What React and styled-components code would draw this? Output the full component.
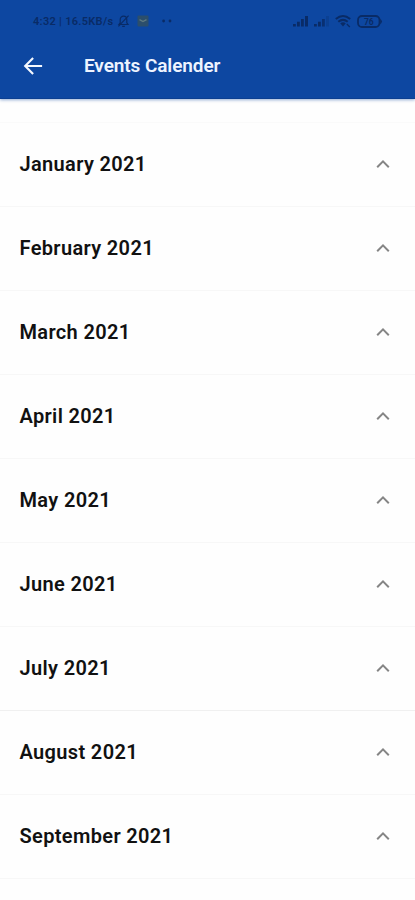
import React, { useState } from "react";
import styled, { createGlobalStyle } from "styled-components";

const GlobalStyle = createGlobalStyle`
  * {
    box-sizing: border-box;
  }

  body {
    margin: 0;
    background: #fefefe;
    font-family: Roboto, "Liberation Sans", sans-serif;
  }
`;

const Screen = styled.main`
  height: 900px;
  overflow: hidden;
`;

const Header = styled.header`
  height: 99px;
  background: #0d47a1;
  border-bottom: 1px solid #0b3f91;
  box-shadow: 0 1px 3px rgba(13, 71, 161, 0.45);
`;

const StatusBar = styled.div`
  display: flex;
  justify-content: space-between;
  align-items: center;
  height: 42px;
  padding: 0 32px 0 33px;
  color: #092b66;
`;

const StatusGroup = styled.div`
  display: flex;
  align-items: center;
  gap: ${(props) => props.$gap}px;

  svg {
    display: block;
  }
`;

const Clock = styled.span`
  width: 80px;
  font-size: 11px;
  font-weight: 600;
  letter-spacing: 0.3px;
  white-space: nowrap;
`;

const Toolbar = styled.div`
  display: flex;
  align-items: center;
  height: 48px;
  padding-left: 20px;
`;

const BackButton = styled.button`
  width: 26px;
  height: 26px;
  margin-right: 38px;
  padding: 0;
  border: 0;
  background: none;
  color: #f4f8ff;

  svg {
    display: block;
  }
`;

const Title = styled.h1`
  margin: 0;
  color: #eef4ff;
  font-size: 19px;
  font-weight: 600;
  letter-spacing: -0.1px;
  line-height: 24px;
`;

const MonthList = styled.ul`
  margin: 23px 0 0;
  padding: 0;
  border-top: 1px solid #fafafa;
  list-style: none;
`;

const MonthRow = styled.li`
  display: flex;
  justify-content: space-between;
  align-items: center;
  height: 84px;
  padding: 0 19px 2px 19.5px;
  border-bottom: 1px solid ${(props) => (props.$strong ? "#f0f0f0" : "#f7f7f7")};
  cursor: pointer;
`;

const MonthName = styled.span`
  color: #111;
  font-size: 20px;
  font-weight: 600;
  letter-spacing: 0.35px;
  line-height: 24px;
`;

const Chevron = styled.svg`
  display: block;
  transform: ${(props) => (props.$open ? "rotate(180deg)" : "none")};
`;

const months = [
  { name: "January 2021" },
  { name: "February 2021" },
  { name: "March 2021" },
  { name: "April 2021" },
  { name: "May 2021" },
  { name: "June 2021" },
  { name: "July 2021", strong: true },
  { name: "August 2021" },
  { name: "September 2021" },
];

const MutedBell = () => (
  <svg width="13" height="14" viewBox="0 0 13 14" fill="none" stroke="currentColor" strokeWidth="1.2">
    <path d="M2 10.5h9L9.8 8.8V5.4a3.3 3.3 0 0 0-6.6 0v3.4zM5.2 12.3h2.6M11.6 1.6L1.4 12.4" />
  </svg>
);

const MailBadge = () => (
  <svg width="12" height="12" viewBox="0 0 12 12">
    <rect x="0.5" y="0.5" width="11" height="11" rx="1" fill="#2b4e6c" />
    <path d="M2.5 4.6L6 6.6l3.5-2" fill="none" stroke="#5f7a80" strokeWidth="1.3" />
  </svg>
);

const Dots = () => (
  <svg width="10" height="4" viewBox="0 0 10 4" fill="currentColor">
    <circle cx="1.6" cy="2" r="1.4" />
    <circle cx="8" cy="2" r="1.4" />
  </svg>
);

// the second SIM shows its last bar faded
const Signal = ({ weak }) => (
  <svg width="16" height="12" viewBox="0 0 16 12" fill="currentColor">
    <path d="M0 9h2.8v2.5H0zM4 6.7h2.8v4.8H4z" />
    <path d="M8 4h2.8v7.5H8z" opacity={weak ? 0.8 : 1} />
    <path d="M12 1h3v10.5h-3z" opacity={weak ? 0.25 : 1} />
  </svg>
);

const Wifi = () => (
  <svg width="17" height="14" viewBox="0 0 17 14" fill="none" stroke="currentColor" strokeWidth="2">
    <path d="M0.8 5q7.2-6 14.4 0M3.3 7.8q4.7-3.8 9.4 0" />
    <path d="M5.2 9.3q2.8-2 5.6 0L8 12.6z" fill="currentColor" stroke="none" />
    <path d="M11.8 10l3 3" strokeWidth="1.2" />
  </svg>
);

const Battery = () => (
  <svg width="26" height="13" viewBox="0 0 26 13">
    <rect x="1" y="1" width="21.5" height="11" rx="4" fill="none" stroke="currentColor" strokeWidth="1.8" />
    <path d="M23.2 3.7q3.4 2.8 0 5.6z" fill="currentColor" />
    <text x="11.8" y="9.6" textAnchor="middle" fontSize="8.5" fontWeight="700" fill="currentColor">
      76
    </text>
  </svg>
);

function App() {
  const [opened, setOpened] = useState(null);

  const toggleMonth = (name) => {
    setOpened(opened === name ? null : name);
  };

  return (
    <Screen>
      <GlobalStyle />
      <Header>
        <StatusBar>
          <StatusGroup $gap={4}>
            <Clock>4:32 | 16.5KB/s</Clock>
            <StatusGroup $gap={7}>
              <MutedBell />
              <StatusGroup $gap={13}>
                <MailBadge />
                <Dots />
              </StatusGroup>
            </StatusGroup>
          </StatusGroup>
          <StatusGroup $gap={5}>
            <Signal />
            <Signal weak />
            <Wifi />
            <Battery />
          </StatusGroup>
        </StatusBar>
        <Toolbar>
          <BackButton aria-label="Back">
            <svg width="26" height="26" viewBox="0 0 24 24" fill="currentColor">
              <path d="M20.4 11H7.1l5.7-5.6L11.4 4l-8 8 8 8 1.4-1.4L7.1 13h13.3z" />
            </svg>
          </BackButton>
          <Title>Events Calender</Title>
        </Toolbar>
      </Header>
      <MonthList>
        {months.map((month) => {
          return (
            <MonthRow
              key={month.name}
              $strong={month.strong}
              onClick={() => toggleMonth(month.name)}
            >
              <MonthName>{month.name}</MonthName>
              <Chevron
                $open={opened === month.name}
                width="26"
                height="26"
                viewBox="0 0 26 26"
                fill="none"
                stroke="#858585"
                strokeWidth="2"
              >
                <path d="M7.2 16.2L13 10.4l5.8 5.8" />
              </Chevron>
            </MonthRow>
          );
        })}
      </MonthList>
    </Screen>
  );
}

export default App;
